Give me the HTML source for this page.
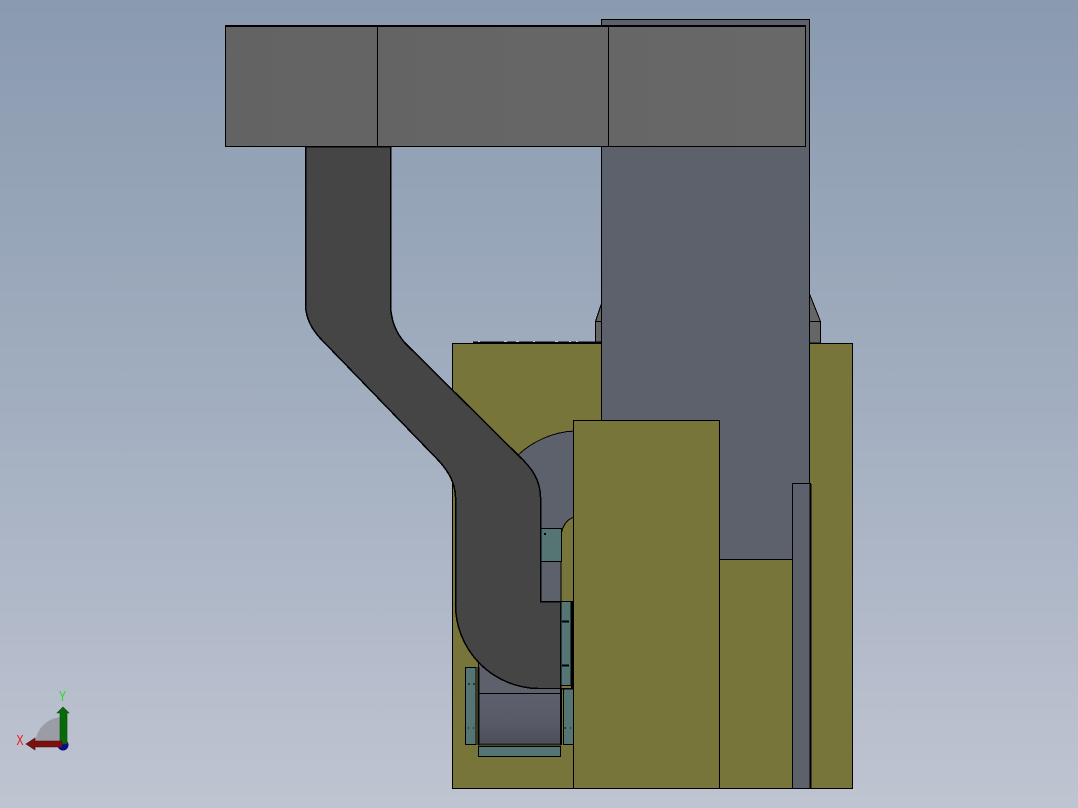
<!DOCTYPE html>
<html>
<head>
<meta charset="utf-8">
<style>
html,body{margin:0;padding:0;width:1078px;height:808px;overflow:hidden;background:#a0acbe}
svg{display:block;position:absolute;left:0;top:0}
</style>
</head>
<body>
<svg width="1078" height="808" viewBox="0 0 1078 808" xmlns="http://www.w3.org/2000/svg" font-family="'Liberation Sans',sans-serif" shape-rendering="crispEdges">
<defs>
<linearGradient id="bg" x1="0" y1="0" x2="0" y2="1">
<stop offset="0" stop-color="#8a9aaf"/>
<stop offset="0.5" stop-color="#a2aec0"/>
<stop offset="1" stop-color="#bfc4d1"/>
</linearGradient>
<linearGradient id="box" x1="0" y1="0" x2="1" y2="0">
<stop offset="0" stop-color="#636363"/>
<stop offset="1" stop-color="#686868"/>
</linearGradient>
<linearGradient id="drum" x1="0" y1="0" x2="0" y2="1">
<stop offset="0" stop-color="#5d616d"/>
<stop offset="0.6" stop-color="#575a66"/>
<stop offset="1" stop-color="#4c4e59"/>
</linearGradient>
</defs>
<rect width="1078" height="808" fill="url(#bg)"/>

<!-- side ears behind tower -->
<g stroke="#000" stroke-width="1">
<path d="M601 305L595.5 321.5V343H602V305Z" fill="#666"/>
<path d="M808 290L820.5 321.5V343H808Z" fill="#666"/>
<path d="M595.5 321.5H602M808 321.5H820.5" fill="none"/>
</g>

<!-- top edge of the base with specks -->
<path d="M473 342.5H601" stroke="#000" stroke-width="2"/>
<path d="M478 341.5h2M504 341.5h3M516 341.5h3M533 341.5h2M555 341.5h3M569 341.5h2M576 341.5h2" stroke="#c5cad3" stroke-width="1"/>

<!-- olive base -->
<rect x="452.5" y="343.5" width="400" height="445" fill="#78753a" stroke="#000"/>

<!-- tower -->
<rect x="601.5" y="19.5" width="208" height="540" fill="#5c616c" stroke="#000"/>

<!-- gray round region -->
<path d="M518 455Q545 433 574 431V517Q561 522 561 540V601.5H540V500Z" fill="#5c616c"/>
<path d="M518 455C532 442 552 432 574 431" fill="none" stroke="#000"/>
<path d="M574 517C566 520 561.5 527 561 538V601.5" fill="none" stroke="#000"/>
<rect x="540.5" y="528.5" width="21" height="33" fill="#557575" stroke="#000"/>
<rect x="544" y="533" width="2" height="2" fill="#000"/>

<!-- lower drum -->
<path d="M478.5 660H560.5V693.5H478.5Z" fill="#5c616c" stroke="#000"/>
<rect x="478.5" y="693.5" width="82" height="50.5" fill="url(#drum)" stroke="#000"/>
<path d="M478 744.500H561" stroke="#222" stroke-width="2"/>
<path d="M478.500 667V745" stroke="#000" stroke-width="2"/>
<path d="M561 688V745" stroke="#000" stroke-width="2"/>

<!-- teal plates -->
<g fill="#557575" stroke="#000">
<rect x="465.5" y="667.5" width="10.5" height="77"/>
<rect x="563.5" y="688.5" width="10" height="56"/>
<rect x="478.5" y="746.5" width="82" height="10"/>
<rect x="560.5" y="601.5" width="10.5" height="84"/>
</g>
<path d="M572 601V688" stroke="#000" stroke-width="2"/>
<path d="M468 684h2M473 684h2M468 728h1M473 728h1M564 728h2M570 728h1" stroke="#000" stroke-width="1"/>
<path d="M562 621.5h7M562 665.5h7" stroke="#000" stroke-width="2"/>

<!-- duct -->
<path d="M305.5 146.500V305C306 318 311 328 320 338L439 461C449 472 455 483 455.5 497V604A84 84 0 0 0 538 688.500H560.5V601.5H540.5V497C540 480 533 469 518 455L405 343C396 333 391 321 390.5 305V146.5Z" fill="#454545" stroke="#000" stroke-width="1.5"/>
<path d="M560 688.500H573" stroke="#000" stroke-width="1.500"/>

<!-- top box -->
<rect x="225.5" y="25.5" width="580" height="121" fill="url(#box)" stroke="#000"/>
<path d="M225 26H806" stroke="#000" stroke-width="2"/>
<path d="M377.5 25V146M608.5 25V146" stroke="#000"/>

<!-- front block -->
<rect x="573.5" y="420.5" width="146" height="368" fill="#78753a" stroke="#000"/>

<!-- column -->
<rect x="792.5" y="483.5" width="18" height="305" fill="#5c616c" stroke="#000"/>
<path d="M810.5 484V789" stroke="#000" stroke-width="2"/>

<!-- triad -->
<g shape-rendering="auto">
<path d="M63 744V717A28 28 0 0 0 35 744Z" fill="#9a9da5"/>
<circle cx="63" cy="745" r="5.500" fill="#0a0a8a"/>
<path d="M60 744V713H57L63 707L69 713H67V744Z" fill="#0a6a0a" stroke="#064a06" stroke-width="0.600"/>
<path d="M62 741H35V738L26 744L35 750V747H62Z" fill="#7a1010" stroke="#500a0a" stroke-width="0.600"/>
</g>
<text transform="translate(59 701) scale(.7 1)" font-size="15" fill="#22dd22">Y</text>
<text transform="translate(16.500 745) scale(.7 1)" font-size="15" fill="#ee1111">X</text>
</svg>
</body>
</html>
